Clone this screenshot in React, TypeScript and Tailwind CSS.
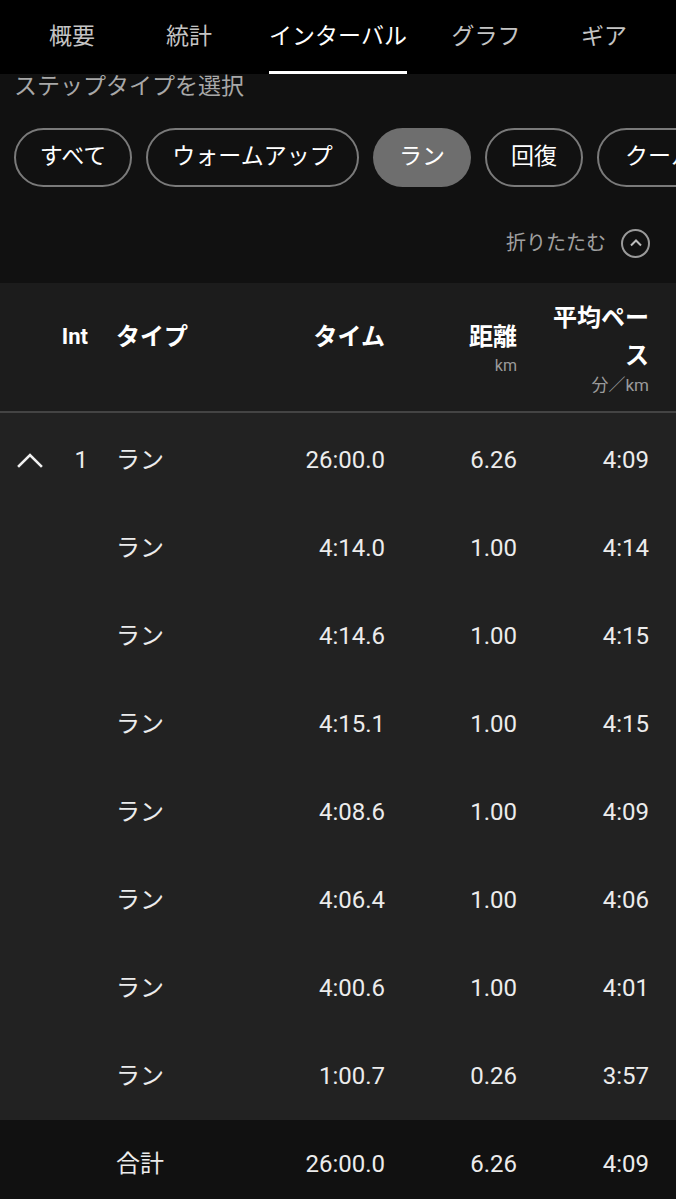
import React from "react";

const rows = [
  { t: "4:14.0", d: "1.00", p: "4:14" },
  { t: "4:14.6", d: "1.00", p: "4:15" },
  { t: "4:15.1", d: "1.00", p: "4:15" },
  { t: "4:08.6", d: "1.00", p: "4:09" },
  { t: "4:06.4", d: "1.00", p: "4:06" },
  { t: "4:00.6", d: "1.00", p: "4:01" },
  { t: "1:00.7", d: "0.26", p: "3:57" },
];

function Row({
  chevron,
  int,
  type,
  t,
  d,
  p,
  bg,
}: {
  chevron?: boolean;
  int?: string;
  type: string;
  t: string;
  d: string;
  p: string;
  bg: string;
}) {
  return (
    <div className={`flex h-[88px] shrink-0 items-center text-[24px] text-[#ececec] ${bg}`}>
      <div className="flex w-[56px] justify-center pl-[4px]">
        {chevron && (
          <svg width="28" height="18" viewBox="0 0 28 18" fill="none">
            <path d="M3 15 L14 4 L25 15" stroke="#f0f0f0" strokeWidth="2.6" strokeLinecap="square" />
          </svg>
        )}
      </div>
      <div className="w-[32px] text-right">{int}</div>
      <div className="ml-[28px] w-[140px]">{type}</div>
      <div className="w-[129px] text-right">{t}</div>
      <div className="w-[132px] text-right">{d}</div>
      <div className="w-[132px] text-right">{p}</div>
    </div>
  );
}

export default function App() {
  return (
    <div className="flex h-[1199px] w-[676px] flex-col overflow-hidden bg-[#111111] font-['Roboto','Noto_Sans_CJK_JP',sans-serif]">
      {/* Top tabs */}
      <div className="flex h-[74px] shrink-0 bg-black pl-[13px] text-[23px]">
        {[
          { l: "概要", w: "w-[118px]" },
          { l: "統計", w: "w-[116px]" },
          { l: "インターバル", w: "w-[182px]", a: true },
          { l: "グラフ", w: "w-[114px]" },
          { l: "ギア", w: "w-[122px]" },
        ].map((tab) => (
          <div key={tab.l} className={`flex shrink-0 justify-center ${tab.w}`}>
            <div
              className={`flex h-full items-center border-b-[3px] ${
                tab.a ? "border-white text-white" : "border-transparent text-[#c4c4c4]"
              }`}
            >
              <span className="mt-[3px]">{tab.l}</span>
            </div>
          </div>
        ))}
      </div>

      {/* Step type selection */}
      <div className="flex shrink-0 flex-col bg-[#111111] pb-[25px]">
        <div className="h-[26px] pl-[14px] text-[23px] leading-[26px] text-[#a8a8a8]">ステップタイプを選択</div>
        <div className="mt-[28px] flex h-[59px] gap-[14px] overflow-hidden whitespace-nowrap pl-[14px] text-[23px] text-white">
          <div className="flex w-[118px] shrink-0 items-center justify-center rounded-full border-2 border-[#7a7a7a]">すべて</div>
          <div className="flex w-[213px] shrink-0 items-center justify-center rounded-full border-2 border-[#7a7a7a]">ウォームアップ</div>
          <div className="flex w-[98px] shrink-0 items-center justify-center rounded-full bg-[#6e6e6e]">ラン</div>
          <div className="flex w-[98px] shrink-0 items-center justify-center rounded-full border-2 border-[#7a7a7a]">回復</div>
          <div className="flex w-[190px] shrink-0 items-center justify-start rounded-full border-2 border-[#7a7a7a] pl-[26px]">クールダウン</div>
        </div>
        <div className="mt-[41px] flex h-[30px] items-center justify-end pr-[26px]">
          <span className="text-[20px] text-[#a0a0a0]">折りたたむ</span>
          <div className="ml-[15px] flex h-[29px] w-[29px] items-center justify-center rounded-full border-2 border-[#9a9a9a]">
            <svg width="14" height="10" viewBox="0 0 14 10" fill="none">
              <path d="M2 7.5 L7 2.5 L12 7.5" stroke="#bdbdbd" strokeWidth="2" />
            </svg>
          </div>
        </div>
      </div>

      {/* Table header */}
      <div className="flex h-[128px] shrink-0 items-center bg-[#1c1c1c] font-bold text-white">
        <div className="w-[56px]" />
        <div className="flex w-[32px] flex-col items-end">
          <div className="text-[22px] leading-[38px]">Int</div>
          <div className="text-[16px] leading-[20px]">&nbsp;</div>
        </div>
        <div className="ml-[28px] flex w-[140px] flex-col">
          <div className="text-[24px] leading-[38px]">タイプ</div>
          <div className="text-[16px] leading-[20px]">&nbsp;</div>
        </div>
        <div className="flex w-[129px] flex-col items-end">
          <div className="text-[24px] leading-[38px]">タイム</div>
          <div className="text-[16px] leading-[20px]">&nbsp;</div>
        </div>
        <div className="flex w-[132px] flex-col items-end">
          <div className="text-[24px] leading-[38px]">距離</div>
          <div className="text-[16px] font-normal leading-[20px] text-[#9a9a9a]">km</div>
        </div>
        <div className="flex w-[132px] flex-col items-end">
          <div className="text-right text-[24px] leading-[38px]">
            平均ペー
            <br />ス
          </div>
          <div className="text-[17px] font-normal leading-[20px] text-[#9a9a9a]">分／km</div>
        </div>
      </div>
      <div className="h-[2px] shrink-0 bg-[#444444]" />
      <div className="h-[3px] shrink-0 bg-[#222222]" />

      {/* Rows */}
      <Row chevron int="1" type="ラン" t="26:00.0" d="6.26" p="4:09" bg="bg-[#222222]" />
      {rows.map((r, i) => (
        <Row key={i} type="ラン" t={r.t} d={r.d} p={r.p} bg="bg-[#222222]" />
      ))}
      <Row type="合計" t="26:00.0" d="6.26" p="4:09" bg="bg-[#111111]" />
    </div>
  );
}
